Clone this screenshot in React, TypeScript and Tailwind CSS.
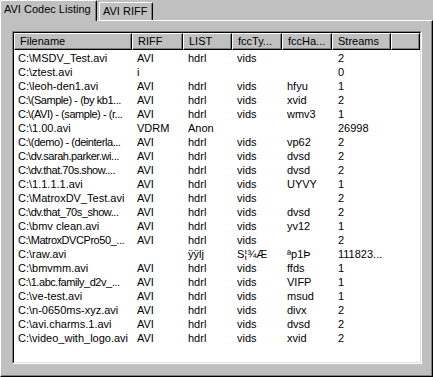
import React from 'react';

type Row = [string, string, string, string, string, string];

const columns = [
  { label: 'Filename', w: 'w-[118px]' },
  { label: 'RIFF', w: 'w-[51px]' },
  { label: 'LIST', w: 'w-[49px]' },
  { label: 'fccTy...', w: 'w-[50px]' },
  { label: 'fccHa...', w: 'w-[50px]' },
  { label: 'Streams', w: 'w-[59px]' },
];

const rows: Row[] = [
  ['C:\\MSDV_Test.avi', 'AVI', 'hdrl', 'vids', '', '2'],
  ['C:\\ztest.avi', 'i', '', '', '', '0'],
  ['C:\\leoh-den1.avi', 'AVI', 'hdrl', 'vids', 'hfyu', '1'],
  ['C:\\(Sample) - (by kb1...', 'AVI', 'hdrl', 'vids', 'xvid', '2'],
  ['C:\\(AVI) - (sample) - (r...', 'AVI', 'hdrl', 'vids', 'wmv3', '1'],
  ['C:\\1.00.avi', 'VDRM', 'Anon', '', '', '26998'],
  ['C:\\(demo) - (deinterla...', 'AVI', 'hdrl', 'vids', 'vp62', '2'],
  ['C:\\dv.sarah.parker.wi...', 'AVI', 'hdrl', 'vids', 'dvsd', '2'],
  ['C:\\dv.that.70s.show....', 'AVI', 'hdrl', 'vids', 'dvsd', '2'],
  ['C:\\1.1.1.1.avi', 'AVI', 'hdrl', 'vids', 'UYVY', '1'],
  ['C:\\MatroxDV_Test.avi', 'AVI', 'hdrl', 'vids', '', '2'],
  ['C:\\dv.that_70s_show...', 'AVI', 'hdrl', 'vids', 'dvsd', '2'],
  ['C:\\bmv clean.avi', 'AVI', 'hdrl', 'vids', 'yv12', '1'],
  ['C:\\MatroxDVCPro50_...', 'AVI', 'hdrl', 'vids', '', '2'],
  ['C:\\raw.avi', '', 'ÿÿlj', 'S¦¾Æ', 'ªp1Þ', '111823...'],
  ['C:\\bmvmm.avi', 'AVI', 'hdrl', 'vids', 'ffds', '1'],
  ['C:\\1.abc.family_d2v_...', 'AVI', 'hdrl', 'vids', 'VIFP', '1'],
  ['C:\\ve-test.avi', 'AVI', 'hdrl', 'vids', 'msud', '1'],
  ['C:\\n-0650ms-xyz.avi', 'AVI', 'hdrl', 'vids', 'divx', '2'],
  ['C:\\avi.charms.1.avi', 'AVI', 'hdrl', 'vids', 'dvsd', '2'],
  ['C:\\video_with_logo.avi', 'AVI', 'hdrl', 'vids', 'xvid', '2'],
];

const HeaderCell: React.FC<{ label: string; className: string }> = ({ label, className }) => (
  <div
    className={`${className} h-[17px] shrink-0 border-t border-l border-white border-r border-b border-r-black border-b-black shadow-[inset_-1px_-1px_#808080] pl-[5px] leading-[15px] whitespace-nowrap overflow-hidden`}
  >
    {label}
  </div>
);

export default function App() {
  return (
    <div
      className="w-[433px] h-[377px] bg-[#c0c0c0] flex flex-col text-[11px] text-black"
      style={{ fontFamily: '"Liberation Sans", Arial, sans-serif' }}
    >
      {/* Tabs */}
      <div className="flex items-end h-[20px] shrink-0">
        <div className="relative z-10 w-[97px] h-[21px] -mb-px bg-[#c0c0c0] border-t border-l border-white border-r border-r-black shadow-[inset_-1px_0_#808080] rounded-tl-[2px] rounded-tr-[2px] pl-[3px] pt-[2px] leading-[13px] whitespace-nowrap">
          AVI Codec Listing
        </div>
        <div className="ml-[2px] w-[54px] h-[18px] border-t border-l border-white border-r border-r-black shadow-[inset_-1px_0_#808080] rounded-tl-[2px] rounded-tr-[2px] pl-[3px] pt-[2px] leading-[13px] whitespace-nowrap">
          AVI RIFF
        </div>
      </div>

      {/* Panel */}
      <div className="flex-1 flex flex-col border-t border-l border-white border-r border-b border-r-black border-b-black shadow-[inset_-1px_-1px_#808080] pl-[11px] pr-[10px] pt-[10px] pb-[12px]">
        {/* List view, sunken frame */}
        <div className="flex-1 flex border border-t-[#808080] border-l-[#808080] border-r-white border-b-white">
          <div className="flex-1 flex flex-col bg-white border border-t-black border-l-black border-r-[#dfdfdf] border-b-[#dfdfdf] overflow-hidden">
            <div className="flex bg-[#c0c0c0]">
              {columns.map((c) => (
                <HeaderCell key={c.label} label={c.label} className={c.w} />
              ))}
              <HeaderCell label="" className="flex-1" />
            </div>
            <div className="pt-[1px]">
              {rows.map((r, i) => (
                <div key={i} className="flex h-[14px] leading-[14px]">
                  {r.map((v, j) => (
                    <div
                      key={j}
                      className={`${columns[j].w} shrink-0 whitespace-nowrap overflow-hidden ${j === 0 ? 'pl-[4px]' : j === 5 ? 'pl-[6px]' : 'pl-[5px]'} ${j === 0 && v.endsWith('...') ? 'tracking-[-0.45px]' : ''}`}
                    >
                      {v}
                    </div>
                  ))}
                </div>
              ))}
            </div>
          </div>
        </div>
      </div>
    </div>
  );
}
